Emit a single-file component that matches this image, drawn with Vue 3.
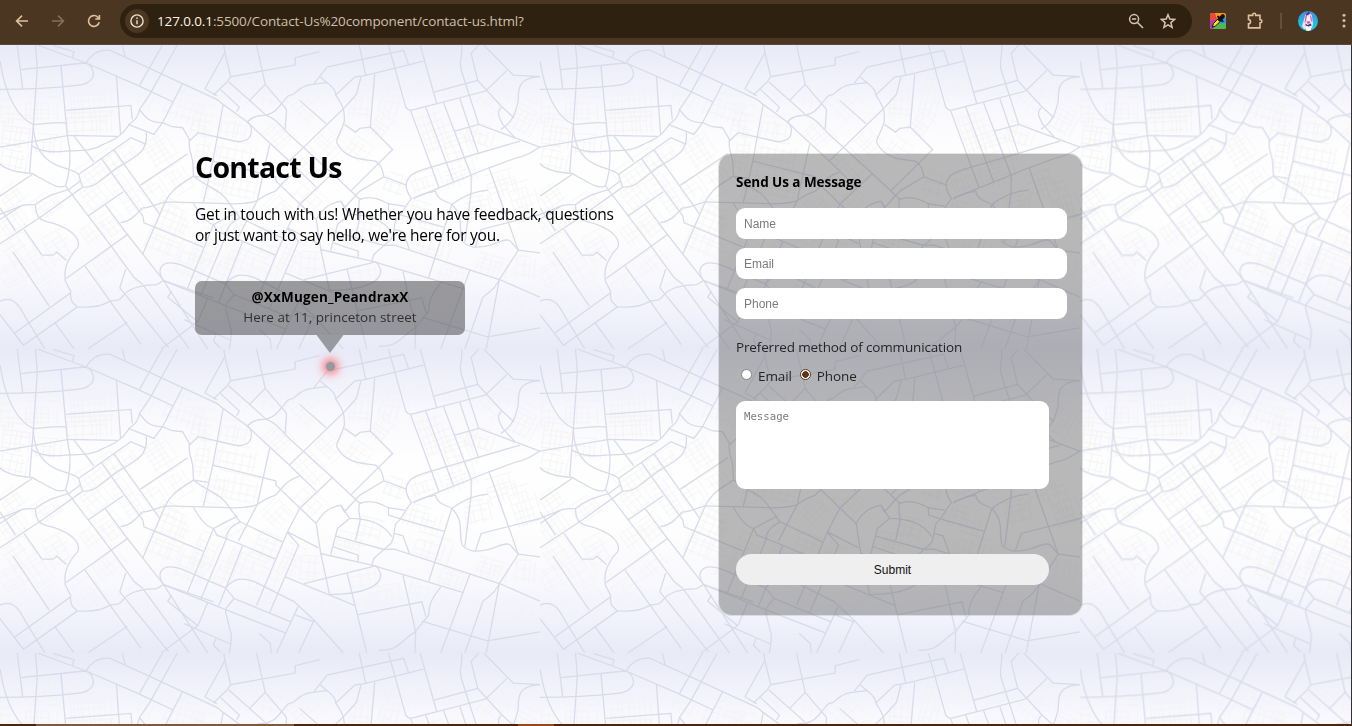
<script setup>
import { ref } from 'vue'

const form = ref({ name: '', email: '', phone: '', method: 'phone', message: '' })

const roads = [
  'M50,12 L66,145',
  'M103,12 C108,80 110,70 105,130 L97,250 C98,300 110,345 160,370 C190,385 215,385 228,400 L240,438',
  'M0,60 C15,160 50,230 97,250 C130,250 160,240 193,246',
  'M0,145 C80,145 160,140 230,132 C265,128 275,105 270,90 C265,72 255,66 245,66 L60,86',
  'M177,73 L195,280 L203,330 C204,380 195,420 190,434 C170,445 150,430 93,397 C60,395 20,390 0,368',
  'M108,12 L250,66 L400,133 L501,182',
  'M155,14 L215,32 L210,50',
  'M250,66 C265,40 290,25 320,28 L430,80 L530,128 L630,175 L648,190 L718,243 L840,360 L918,438',
  'M355,12 L364,48',
  'M472,12 L405,133',
  'M515,12 L435,160 L405,205 C400,240 380,240 372,255 C350,290 320,300 300,310 C270,330 240,328 190,330 C150,335 120,332 93,315',
  'M530,128 L472,245 L447,280 L372,250',
  'M405,205 C425,235 440,245 472,245 L500,257 L530,260 L550,295 C545,330 560,340 560,370 L562,405 L605,412',
  'M338,105 L350,278',
  'M193,208 L380,193 L384,235',
  'M0,318 L200,283 L340,286',
  'M97,250 L86,395',
  'M0,465 L93,400',
  'M215,285 L272,362',
  'M228,400 L380,290 L425,310',
  'M425,275 C430,330 400,345 340,380 L290,420 C270,440 250,438 240,438',
  'M0,520 L60,495 Q70,490 103,490 C140,460 170,455 200,445 L235,418',
  'M0,608 L115,530 L240,438',
  'M0,535 L60,495',
  'M103,490 C103,540 130,540 160,548 C220,570 235,600 225,620 C190,660 185,690 190,720 L205,750 C203,780 210,785 225,797 C290,800 300,790 325,778 C360,780 350,760 380,745 C410,730 430,732 455,730 L475,718',
  'M190,434 L325,618 L390,710 L415,730',
  'M294,352 L415,525 L418,545 L590,618',
  'M330,325 L463,518',
  'M408,432 L545,338',
  'M550,300 L575,275 L690,302 C725,300 730,285 730,265 C728,250 720,243 718,243',
  'M718,243 C735,220 760,225 770,222 C790,220 800,210 820,185 C835,165 840,160 852,160 C880,130 900,130 930,127 L950,125 C970,140 975,150 975,162 C1000,200 1000,210 1000,240 C990,280 975,290 978,305 C1000,350 1040,355 1090,360 C1112,375 1110,390 1115,407 L1180,432',
  'M770,222 C800,230 820,260 840,280 L965,397 L1045,475',
  'M255,525 L358,452',
  'M305,490 L370,580 L192,712',
  'M370,580 L475,718 L620,770',
  'M350,545 C390,538 400,510 415,500 C440,500 450,490 480,482 L640,487 C700,490 730,487 747,478 C780,455 790,455 800,450 C820,430 830,405 870,393',
  'M415,638 L480,482 C500,440 540,420 562,405 C600,440 640,440 668,490 L697,530 L820,590',
  'M562,487 C580,520 600,545 620,550 L690,512',
  'M620,550 L630,570 L700,598 L800,642',
  'M697,530 C660,550 665,560 655,575',
  'M648,190 L618,360 L590,485',
  'M618,360 L800,407 L802,420 L918,535',
  'M783,310 L747,478 L692,588',
  'M840,360 L1000,200',
  'M870,178 L947,248',
  'M660,122 L620,162 M595,143 L630,165 M595,143 L653,35 L650,12',
  'M653,35 L670,107 L857,72 L857,50 L928,32',
  'M745,12 L770,130 L725,178',
  'M770,130 L832,205 L828,265',
  'M660,122 L670,107',
  'M640,145 L695,198 L687,213',
  'M664,122 L770,220',
  'M912,127 L950,78 L1172,28 L1187,73',
  'M930,108 L950,125',
  'M1043,12 L1062,103',
  'M975,162 L1030,108 L1062,103 L1230,60',
  'M1128,12 L1178,198 Q1185,212 1205,205 L1410,150 L1472,88',
  'M1048,108 L1035,160 L1000,200',
  'M1088,100 L1075,258 L1140,325 L1018,450',
  'M1115,407 L1045,450 L1000,500 L990,480',
  'M1000,250 L1032,273 L1045,262 L1075,258',
  'M1220,12 L1268,187',
  'M1260,153 L1387,118',
  'M1340,12 C1345,50 1330,60 1340,90 L1390,250',
  'M1390,12 L1368,38 L1387,118 L1455,195 L1492,230',
  'M1405,12 L1490,102 L1568,107',
  'M1568,107 C1500,110 1505,150 1505,180 C1495,220 1490,240 1455,265',
  'M1455,200 C1440,215 1450,230 1460,250 L1495,290',
  'M1192,208 L1275,440',
  'M1236,198 L1318,425',
  'M1288,185 L1368,403 L1368,450 L1350,603',
  'M1335,172 L1390,340',
  'M1320,270 L1390,250 L1568,318',
  'M1510,300 L1230,385 C1180,400 1165,430 1195,472',
  'M1568,318 C1540,335 1530,345 1500,350 L1420,380 L1275,440 L1200,472',
  'M1420,380 L1505,627 L1568,635',
  'M1195,472 C1165,510 1170,520 1150,535 C1140,560 1150,570 1135,595 L1115,613 L1085,640 L1080,660',
  'M1200,472 C1240,450 1250,455 1265,450',
  'M1265,450 C1270,480 1300,480 1312,490 C1350,530 1330,560 1342,600 C1360,620 1380,620 1410,615 C1440,610 1460,590 1480,598 L1505,627 L1450,715 C1430,760 1400,760 1400,775 L1350,923',
  'M1312,490 L1245,708',
  'M1312,490 C1350,460 1380,450 1417,447',
  'M1380,618 L1397,565 L1568,520',
  'M1175,495 L1128,488 L1128,510 L1165,522 L1288,558',
  'M1045,475 C1080,460 1110,480 1128,488',
  'M1045,470 C1035,510 1050,510 1045,530 L1033,585',
  'M870,490 L965,397',
  'M870,490 L835,560 L745,780',
  'M918,535 C940,495 960,487 990,480 L1015,520 C1060,520 1110,530 1138,575',
  'M1015,520 L980,550 L960,628',
  'M975,573 L1115,613 L1145,612 L1450,715 L1568,768',
  'M968,605 L1040,630 L1040,648',
  'M918,535 L932,628 L957,748',
  'M835,560 L925,608',
  'M930,625 L1080,660 L1345,742',
  'M835,562 L867,600 L783,802',
  'M1145,565 L1170,572 L1190,628',
  'M955,748 C1060,748 1110,720 1105,685 C1100,670 1095,665 1090,662 L883,715',
  'M828,695 L1033,782',
  'M1008,685 L1065,923',
  'M1040,808 L1225,770 L1237,815',
  'M1170,690 L1207,860 L1205,923',
  'M1280,725 C1245,770 1245,790 1245,810 L1205,860 C1160,890 1160,915 1100,915',
  'M1225,828 L1415,887 L1568,860',
  'M1365,685 L1280,923',
  'M1450,715 L1412,923',
  'M475,718 C455,690 465,665 495,665 C530,665 560,690 655,728',
  'M620,550 L543,745',
  'M660,575 L583,762',
  'M705,600 L635,782',
  'M655,728 C680,700 700,695 740,710 L855,770 L912,825 L997,923',
  'M655,728 L680,760 L845,830',
  'M680,760 C655,790 655,790 655,800 L672,870 C670,900 670,910 665,923',
  'M475,718 L640,787 L828,863',
  'M603,772 L575,840 L468,923',
  'M498,750 L487,768 L575,842',
  'M415,730 L550,923',
  'M475,718 L603,923',
  'M535,835 L670,897',
  'M627,880 L620,900 L640,920',
  'M865,785 L803,923',
  'M912,825 L867,923',
  'M858,810 L912,830',
  'M753,865 L785,895 L787,923',
  'M247,675 L410,910',
  'M365,683 L348,740 L490,920',
  'M160,845 L215,923',
  'M370,843 L255,923',
  'M38,633 L143,795',
  'M0,820 L68,912 L225,797',
  'M43,875 L205,755',
  'M0,780 C40,760 60,800 75,830 L130,923',
  'M70,565 L122,642 L155,642 L165,633 L193,658',
  'M0,500 L45,570'
]

// Blocks of side streets: centre x, centre y, width, height, rotation in degrees
const blocks = [
  [120, 115, 100, 80, -3], [130, 195, 110, 85, 0], [270, 170, 130, 120, -3], [260, 245, 130, 65, -3],
  [50, 270, 80, 100, 8], [45, 350, 80, 70, 12], [145, 310, 80, 60, 5], [290, 380, 150, 70, -35],
  [360, 350, 110, 60, -35], [470, 340, 110, 80, 58], [420, 170, 60, 50, 25], [540, 200, 120, 80, 18],
  [590, 240, 60, 100, 10], [680, 260, 75, 65, 10], [690, 340, 120, 75, 12], [690, 425, 130, 80, 12],
  [590, 330, 40, 130, 10], [700, 150, 80, 50, 48], [800, 170, 70, 60, 10], [890, 190, 100, 80, 45],
  [815, 290, 90, 70, 48], [900, 370, 100, 70, 48], [960, 310, 80, 60, 45], [1050, 180, 65, 100, 5],
  [1140, 170, 60, 110, 15], [1110, 260, 60, 70, 35], [1050, 330, 80, 60, 35], [1230, 130, 110, 80, -15],
  [1330, 135, 90, 55, -15], [1260, 260, 75, 140, -19], [1330, 310, 80, 130, -19], [1430, 180, 70, 70, 38],
  [1400, 280, 90, 60, 18], [1530, 230, 70, 100, 28], [1480, 150, 50, 70, 8], [1240, 415, 90, 55, -19],
  [1340, 405, 90, 55, -19], [1460, 430, 90, 80, -18], [1525, 480, 75, 120, -18], [1390, 500, 80, 70, -12],
  [1230, 520, 110, 70, 17], [1260, 610, 110, 75, 17], [1150, 430, 60, 60, 20], [1080, 550, 80, 60, 15],
  [1020, 590, 80, 50, 15], [900, 470, 70, 80, -48], [810, 500, 80, 75, -45], [510, 540, 100, 75, 23],
  [490, 610, 130, 70, 23], [600, 620, 70, 110, 23], [710, 650, 90, 85, 23], [780, 610, 80, 85, 23],
  [670, 550, 60, 50, -30], [565, 680, 100, 65, 23], [660, 690, 60, 70, 23], [770, 710, 80, 80, 23],
  [850, 650, 60, 100, 23], [910, 670, 75, 75, 5], [1060, 700, 80, 60, -10], [1120, 750, 120, 60, -10],
  [1240, 740, 100, 60, 17], [1320, 705, 90, 55, 17], [1430, 675, 90, 60, 17], [1330, 790, 80, 70, 17],
  [1410, 810, 80, 70, 20], [1530, 680, 65, 70, 5], [1510, 800, 80, 80, 10], [40, 540, 80, 80, -35],
  [40, 460, 75, 60, -35], [140, 490, 90, 70, -35], [60, 620, 90, 75, -35], [120, 690, 100, 85, 58],
  [170, 610, 70, 80, -30], [285, 460, 80, 70, -38], [330, 540, 70, 70, -38], [370, 460, 50, 130, -33],
  [280, 570, 80, 60, -35], [260, 740, 90, 80, -35], [320, 660, 90, 60, -38], [45, 710, 90, 75, 58],
  [160, 770, 70, 70, -38], [35, 800, 70, 60, 20], [400, 750, 90, 65, -35], [430, 800, 80, 70, 55],
  [500, 500, 80, 45, 23], [545, 790, 70, 60, 45], [750, 790, 110, 55, 23], [970, 790, 80, 70, 30],
  [450, 440, 80, 60, -33], [520, 420, 70, 60, 58], [15, 200, 45, 90, 2], [620, 440, 60, 70, 12]
]

function wobble(n) {
  const v = Math.sin(n * 12.9898) * 43758.5453
  return v - Math.floor(v)
}

const sideStreets = blocks.map(([cx, cy, w, h, angle], index) => {
  let d = ''
  let step = 0
  for (let x = -w / 2; x <= w / 2; x += 10 + wobble(index * 31 + step) * 17) {
    const trim = wobble(index + step * 3) * h * 0.4
    d += `M${x.toFixed(1)},${(-h / 2 + trim).toFixed(1)} V${(h / 2).toFixed(1)} `
    step++
  }
  for (let y = -h / 2; y <= h / 2; y += 12 + wobble(index * 17 + step) * 18) {
    const trim = wobble(index * 5 + step) * w * 0.4
    d += `M${(-w / 2).toFixed(1)},${y.toFixed(1)} H${(w / 2 - trim).toFixed(1)} `
    step++
  }
  return { d, transform: `translate(${cx} ${cy}) rotate(${angle})` }
})
</script>

<template>
  <div class="window">
    <header class="toolbar">
      <svg class="nav" viewBox="0 0 16 16"><path d="M14 8H2.8M8 2.6 2.6 8 8 13.4" /></svg>
      <svg class="nav dim" viewBox="0 0 16 16"><path d="M2 8h11.2M8 2.6 13.4 8 8 13.4" /></svg>
      <svg class="nav" viewBox="0 0 16 16"><path d="M13.2 9.2A5.4 5.4 0 1 1 11.8 4.2L13.2 5.6M13.4 1.9V6H9.3" /></svg>
      <div class="address">
        <span class="info">
          <svg viewBox="0 0 16 16"><circle cx="8" cy="8" r="6.1" /><path d="M8 7.3v4M8 4.5v1.6" /></svg>
        </span>
        <span class="url"><b>127.0.0.1</b>:5500/Contact-Us%20component/contact-us.html?</span>
        <svg class="tool lens" viewBox="0 0 16 16"><circle cx="6.1" cy="6.1" r="4.5" /><path d="M9.5 9.5 15 15M4 6.1h4.2" /></svg>
        <svg class="tool" viewBox="0 0 16 16"><path d="m8 1.7 1.8 4.4 4.8.4-3.7 3.1 1.2 4.7L8 11.8l-4.1 2.5 1.2-4.7-3.7-3.1 4.8-.4z" /></svg>
      </div>
      <svg class="picker" viewBox="0 0 16 16">
        <defs><clipPath id="tile"><rect width="16" height="16" rx="2" /></clipPath></defs>
        <g clip-path="url(#tile)">
          <path fill="#ff9820" d="M0 0h16v16H0z" /><path fill="#f4453c" d="M0 0h5l2 6-7 3z" />
          <path fill="#b03bb8" d="M0 8l7-2-2 10H0z" /><path fill="#2995ed" d="M8 8l8-4v7l-8 1z" />
          <path fill="#52b952" d="M6 11l10-1v6H3z" />
        </g>
        <path d="M2.2 14.2 3.4 10.6 8.8 5 11.2 7.4 5.6 13z" fill="#ffe31a" stroke="#17120c" stroke-width="1" />
        <path d="M8 3.6 12.6 8.2" stroke="#120f0c" stroke-width="2" stroke-linecap="round" />
        <path d="M9.8 6.2 12.8 3.2" stroke="#120f0c" stroke-width="4.2" stroke-linecap="round" />
      </svg>
      <svg class="puzzle" viewBox="0 0 18 18"><path d="M2.5 3.4h4.2V2.8a1.5 1.5 0 0 1 3 0v.6H14v4.4h.4a1.5 1.5 0 0 1 0 3H14v5.1H2.5v-4.1c2.7-.2 2.7-4.1 0-4.3z" /></svg>
      <span class="divider"></span>
      <svg class="avatar" viewBox="0 0 20 20">
        <defs>
          <clipPath id="face"><circle cx="10" cy="10" r="10" /></clipPath>
          <linearGradient id="sky" x1="0" y1="0" x2="0" y2="1"><stop offset="0" stop-color="#3f8fdc" /><stop offset="1" stop-color="#10d6e8" /></linearGradient>
        </defs>
        <g clip-path="url(#face)">
          <path fill="url(#sky)" d="M0 0h20v20H0z" />
          <path fill="#f3dff4" d="M7 5c1-4 6-4 7 0l1 8-1 4-8 1-2-3z" />
          <path fill="#4a3aa0" d="M8 3l3-3 1 3-4 2z" /><path fill="#d9559f" d="M7.5 5 9 4l-1 6-1.500 2zM12 4l1.500 2 .5 5-1.500-2z" />
          <path fill="#fff4f5" d="M9 5.500h3l.5 3.500-2 1.500-1.500-1.500zM8 15h5v5H8z" />
          <path fill="#59306e" d="M7.500 12.500l2 1.500 3.500-1.500.5 2-3 1-3-1z" /><path fill="#b4568e" d="M8.500 10.500h4l-1 2h-2z" />
        </g>
      </svg>
      <svg class="menu" viewBox="0 0 4 16"><circle cx="2" cy="2.2" r="1.5" /><circle cx="2" cy="7.6" r="1.5" /><circle cx="2" cy="13" r="1.5" /></svg>
    </header>

    <main class="page">
      <div class="map">
        <svg v-for="n in 9" :key="n" class="map-tile" viewBox="0 12 1568 911.25" preserveAspectRatio="none">
          <defs v-if="n === 1">
            <linearGradient id="minorFade" x1="0" y1="0" x2="0" y2="1">
              <stop offset="0" stop-color="#000" /><stop offset=".1" stop-color="#555" />
              <stop offset=".25" stop-color="#fff" /><stop offset=".7" stop-color="#fff" />
              <stop offset=".9" stop-color="#333" /><stop offset="1" stop-color="#000" />
            </linearGradient>
            <mask id="minorMask" maskUnits="userSpaceOnUse" x="0" y="12" width="1568" height="911">
              <rect x="0" y="12" width="1568" height="911" fill="url(#minorFade)" />
            </mask>
            <g id="streets">
              <g class="minor" mask="url(#minorMask)">
                <path v-for="(s, i) in sideStreets" :key="i" :d="s.d" :transform="s.transform" />
              </g>
              <g class="major"><path v-for="(d, i) in roads" :key="i" :d="d" /></g>
            </g>
          </defs>
          <use href="#streets" />
        </svg>
      </div>

      <section class="intro">
        <h1>Contact Us</h1>
        <p class="lead">Get in touch with us! Whether you have feedback, questions<br />or just want to say hello, we're here for you.</p>
        <div class="bubble">
          <strong>@XxMugen_PeandraxX</strong>
          <span>Here at 11, princeton street</span>
        </div>
        <div class="arrow"></div>
        <div class="dot"></div>
      </section>

      <form class="card" @submit.prevent>
        <h2>Send Us a Message</h2>
        <input v-model="form.name" class="field" placeholder="Name" />
        <input v-model="form.email" class="field" placeholder="Email" />
        <input v-model="form.phone" class="field" placeholder="Phone" />
        <p class="question">Preferred method of communication</p>
        <div class="options">
          <label><input v-model="form.method" type="radio" value="email" /><span>Email</span></label>
          <label><input v-model="form.method" type="radio" value="phone" /><span>Phone</span></label>
        </div>
        <textarea v-model="form.message" placeholder="Message"></textarea>
        <button type="submit">Submit</button>
      </form>
    </main>
    <footer class="taskbar"><i class="wide"></i><i class="active"></i></footer>
  </div>
</template>

<style>
body { margin: 0; overflow: hidden; }
</style>

<style scoped>
* { box-sizing: border-box; }
.window {
  display: flex;
  flex-direction: column;
  width: 1352px;
  height: 726px;
  overflow: hidden;
  font-family: "Open Sans", "Noto Sans", sans-serif;
  color: #000;
}
.toolbar {
  display: flex;
  align-items: center;
  flex: none;
  height: 45px;
  padding: 0 0 3px 14px;
  background: #4a3621;
  border-bottom: 1px solid #5a4a3b;
}
.toolbar svg { flex: none; fill: none; stroke: #dfc09e; stroke-width: 1.6; }
.nav { width: 16px; height: 16px; margin-right: 20px; }
.toolbar .nav.dim { stroke: #85705a; }
.address {
  display: flex;
  align-items: center;
  width: 1072px;
  height: 34px;
  margin-left: -2px;
  padding: 0 16px 0 5px;
  border-radius: 17px;
  background: #2f210f;
}
.info {
  display: grid;
  place-items: center;
  width: 24px;
  height: 24px;
  margin-right: 8px;
  border-radius: 50%;
  background: #4a3621;
}
.info svg { width: 16px; height: 16px; stroke: #f0dfcd; stroke-width: 1.4; }
.url { flex: 1; font-size: 13.5px; letter-spacing: -0.12px; color: #cdbfad; white-space: nowrap; }
.url b { font-weight: 400; color: #fff4e8; }
.address .tool { width: 16px; height: 16px; stroke: #d5c4b1; stroke-width: 1.5; }
.lens { margin-right: 16px; }
.toolbar .picker { width: 16px; height: 16px; margin-left: 18px; stroke: none; }
.toolbar .puzzle { width: 18px; height: 18px; margin-left: 20px; }
.divider { width: 2px; height: 16px; margin: 0 16px; background: #665039; }
.toolbar .avatar { width: 20px; height: 20px; stroke: none; }
.toolbar .menu { width: 4px; height: 16px; margin-left: 24px; fill: #dfc09e; stroke: none; }

.page {
  position: relative;
  display: flex;
  flex: 1;
  align-items: flex-start;
  overflow: hidden;
  border-right: 1px solid #343230;
}
.map {
  position: absolute;
  inset: 0;
  display: grid;
  grid-template-columns: repeat(3, 540px);
  grid-auto-rows: 304px;
}
.map-tile {
  width: 540px;
  height: 304px;
  background: linear-gradient(#e8eaf7 0%, #eff0fa 9%, #f9f9fd 22%, #fefefe 36%, #fefefe 58%, #f9f9fd 75%, #f0f1fb 90%, #e8eaf7 100%);
}
.minor path { fill: none; stroke: #f1f1f2; stroke-width: 0.7px; vector-effect: non-scaling-stroke; }
.major path { fill: none; stroke: #d8dbea; stroke-width: 1.3px; vector-effect: non-scaling-stroke; }

.intro { position: relative; flex: none; width: 718px; padding: 103px 0 0 195px; }
h1 { margin: 0; font-size: 28.5px; line-height: 38px; font-weight: 700; letter-spacing: -0.75px; white-space: nowrap; }
.lead { margin: 18px 0 0; font-size: 15.5px; line-height: 21px; white-space: nowrap; letter-spacing: -0.24px; }
.bubble {
  display: flex;
  flex-direction: column;
  align-items: center;
  width: 270px;
  height: 54px;
  margin-top: 35px;
  padding-top: 6px;
  border-radius: 7px;
  background: rgba(72, 72, 72, 0.53);
  font-size: 13.5px;
  line-height: 20px;
}
.bubble strong { font-weight: 700; letter-spacing: 0.18px; }
.bubble span { color: #303030; }
.arrow {
  width: 27px;
  height: 18px;
  margin-left: 121.5px;
  background: #989aa0;
  clip-path: polygon(0 0, 100% 0, 50% 100%);
}
.dot {
  width: 9px;
  height: 9px;
  margin: 9px 0 0 131px;
  border-radius: 50%;
  background: #939aa0;
  box-shadow: 0 0 9px 3px rgba(255, 70, 70, 0.75);
}
.card {
  position: relative;
  display: flex;
  flex: none;
  flex-direction: column;
  align-items: flex-start;
  width: 365px;
  height: 463px;
  margin-top: 108px;
  padding: 18px 16px 0 17px;
  border: 1px solid rgba(150, 150, 150, 0.25);
  border-radius: 14px;
  background: rgba(112, 112, 112, 0.49);
  background-clip: padding-box;
}
h2 { margin: 0 0 16px; font-size: 13.5px; line-height: 20px; font-weight: 700; letter-spacing: -0.05px; }
.field {
  width: 331px;
  height: 31px;
  margin: 0 0 9px;
  padding: 0 8px;
  border: 0;
  border-radius: 9px;
  background: #fff;
  font: 12px "Liberation Sans", Arial, sans-serif;
}
.field::placeholder, textarea::placeholder { color: #7b7b7b; opacity: 1; }
.question { margin: 9px 0; font-size: 13.5px; line-height: 20px; letter-spacing: -0.15px; color: #242424; white-space: nowrap; }
.options { display: flex; gap: 8px; height: 20px; padding-left: 5px; font-size: 13.5px; letter-spacing: -0.1px; line-height: 20px; color: #242424; }
label { display: flex; }
label span { margin-left: 6px; }
input[type="radio"] {
  appearance: none;
  width: 11px;
  height: 11px;
  margin: 3px 0 0;
  border: 1px solid #858585;
  border-radius: 50%;
  background: #fff;
}
input[type="radio"]:checked { border-color: #603716; background: radial-gradient(circle, #603716 3px, #fff 3.6px); }
textarea {
  width: 313px;
  height: 88px;
  margin: 15px 0 65px;
  padding: 9px 8px;
  border: 0;
  border-radius: 9px;
  background: #fff;
  resize: none;
  font: 10.7px/14px "DejaVu Sans Mono", monospace;
}
button {
  width: 313px;
  height: 31px;
  border: 0;
  border-radius: 16px;
  background: #efefef;
  color: #111;
  font: 12px "Liberation Sans", Arial, sans-serif;
}
.taskbar { display: flex; flex: none; height: 2px; padding-left: 36px; background: #4b260e; }
.wide { width: 258px; background: #80583b; }
.active { width: 36px; margin-left: 224px; background: #93491b; }
</style>
